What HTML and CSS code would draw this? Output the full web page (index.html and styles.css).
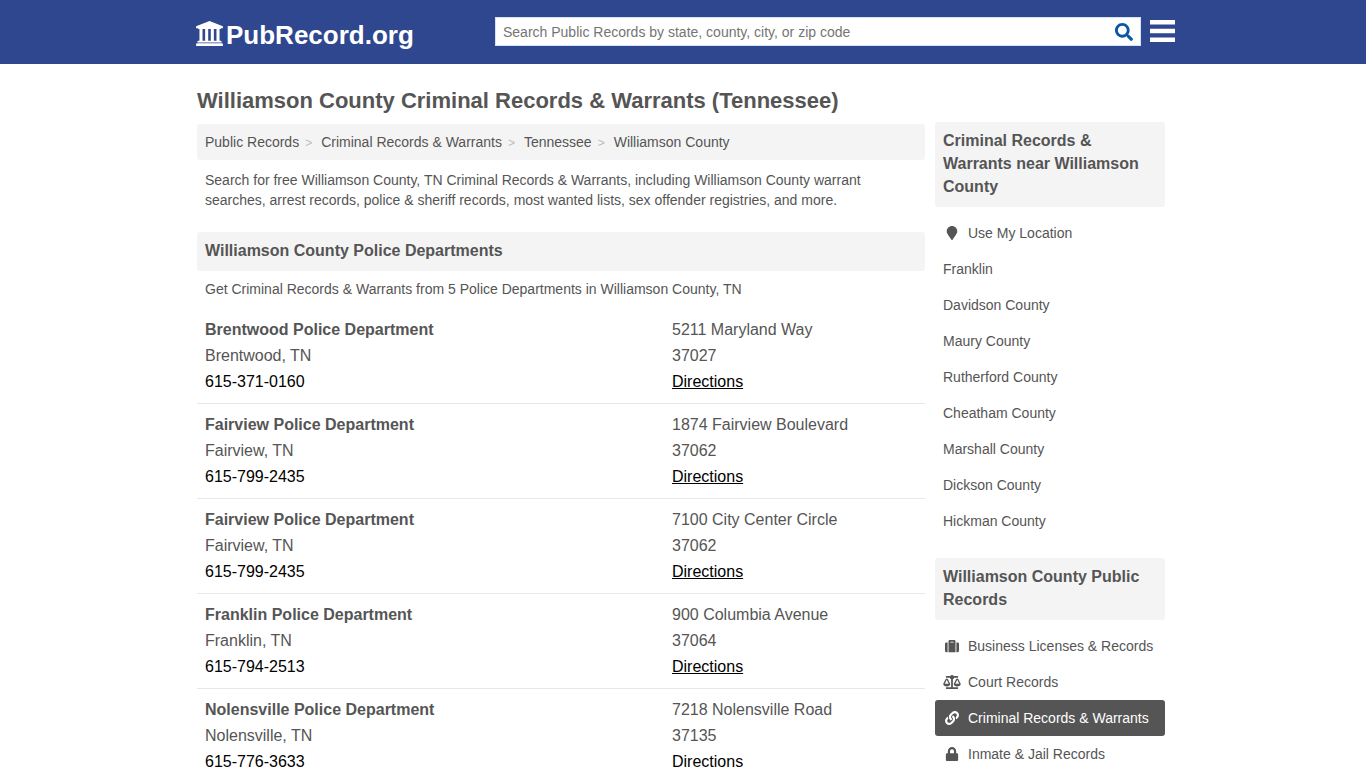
FILE: index.html
```html
<!DOCTYPE html>
<html lang="en">
<head>
    <meta charset="UTF-8">
    <meta name="viewport" content="width=device-width, initial-scale=1.0">
    <title>Williamson County Criminal Records &amp; Warrants (Tennessee)</title>
    <link rel="stylesheet" href="styles.css">
</head>
<body>
<header class="header">
    <div class="wrap header_row">
        <a class="logo" href="#">
            <svg class="logo_icon" viewBox="0 0 1920 1792"><path d="M960 0l960 384v128h-128q0 26-20.500 45t-48.500 19h-1526q-28 0-48.500-19t-20.500-45h-128v-128zM240 560h220v848h187v-848h220v848h186v-848h220v848h187v-848h220v848h75q28 0 48.500 19t20.500 45v64h-1728v-64q0-26 20.500-45t48.500-19h75v-848zM1851 1600q28 0 48.500 19t20.500 45v128h-1920v-128q0-26 20.500-45t48.500-19h1782z"/></svg>
            <span>PubRecord.org</span>
        </a>
        <form class="search">
            <input class="search_input" type="text" aria-label="Search Public Records" placeholder="Search Public Records by state, county, city, or zip code">
            <button class="search_btn" type="button" aria-label="Search">
                <svg class="search_icon" viewBox="0 0 512 512"><path d="M505 442.7L405.3 343c-4.5-4.5-10.6-7-17-7H372c27.6-35.3 44-79.7 44-128C416 93.1 322.9 0 208 0S0 93.1 0 208s93.1 208 208 208c48.3 0 92.7-16.4 128-44v16.3c0 6.4 2.5 12.5 7 17l99.7 99.7c9.4 9.4 24.6 9.4 33.9 0l28.3-28.3c9.4-9.4 9.4-24.6.1-34zM208 336c-70.7 0-128-57.2-128-128 0-70.7 57.2-128 128-128 70.7 0 128 57.2 128 128 0 70.7-57.2 128-128 128z"/></svg>
            </button>
        </form>
        <button class="menu_btn" type="button" aria-label="Menu">
            <svg class="menu_icon" viewBox="0 0 25 22"><path d="M0 0h25v4.400H0zM0 8.800h25v4.400H0zM0 17.600h25V22H0z"/></svg>
        </button>
    </div>
</header>
<div class="wrap">
    <h1 class="title">Williamson County Criminal Records &amp; Warrants (Tennessee)</h1>
    <div class="columns">
        <main class="main">
            <nav class="breadcrumb">
                <a href="#">Public Records</a>
                <a href="#">Criminal Records &amp; Warrants</a>
                <a href="#">Tennessee</a>
                <a href="#">Williamson County</a>
            </nav>
            <p class="text intro">Search for free Williamson County, TN Criminal Records &amp; Warrants, including Williamson County warrant searches, arrest records, police &amp; sheriff records, most wanted lists, sex offender registries, and more.</p>
            <h2 class="heading">Williamson County Police Departments</h2>
            <p class="text">Get Criminal Records &amp; Warrants from 5 Police Departments in Williamson County, TN</p>
            <div class="offices">
                <div class="office">
                    <div><b>Brentwood Police Department</b><br>Brentwood, TN<br><a class="phone" href="tel:6153710160">615-371-0160</a></div>
                    <div>5211 Maryland Way<br>37027<br><a class="directions" href="#">Directions</a></div>
                </div>
                <div class="office">
                    <div><b>Fairview Police Department</b><br>Fairview, TN<br><a class="phone" href="tel:6157992435">615-799-2435</a></div>
                    <div>1874 Fairview Boulevard<br>37062<br><a class="directions" href="#">Directions</a></div>
                </div>
                <div class="office">
                    <div><b>Fairview Police Department</b><br>Fairview, TN<br><a class="phone" href="tel:6157992435">615-799-2435</a></div>
                    <div>7100 City Center Circle<br>37062<br><a class="directions" href="#">Directions</a></div>
                </div>
                <div class="office">
                    <div><b>Franklin Police Department</b><br>Franklin, TN<br><a class="phone" href="tel:6157942513">615-794-2513</a></div>
                    <div>900 Columbia Avenue<br>37064<br><a class="directions" href="#">Directions</a></div>
                </div>
                <div class="office">
                    <div><b>Nolensville Police Department</b><br>Nolensville, TN<br><a class="phone" href="tel:6157763633">615-776-3633</a></div>
                    <div>7218 Nolensville Road<br>37135<br><a class="directions" href="#">Directions</a></div>
                </div>
            </div>
        </main>
        <aside class="side">
            <h2 class="heading">Criminal Records &amp; Warrants near Williamson County</h2>
            <ul class="side_list">
                <li><a href="#"><svg class="side_icon" viewBox="0 0 384 512"><path d="M172.268 501.67C26.97 291.031 0 269.413 0 192 0 85.961 85.961 0 192 0s192 85.961 192 192c0 77.413-26.97 99.031-172.268 309.67-9.535 13.774-29.93 13.773-39.464 0z"/></svg>Use My Location</a></li>
                <li><a href="#">Franklin</a></li>
                <li><a href="#">Davidson County</a></li>
                <li><a href="#">Maury County</a></li>
                <li><a href="#">Rutherford County</a></li>
                <li><a href="#">Cheatham County</a></li>
                <li><a href="#">Marshall County</a></li>
                <li><a href="#">Dickson County</a></li>
                <li><a href="#">Hickman County</a></li>
            </ul>
            <h2 class="heading">Williamson County Public Records</h2>
            <ul class="side_list">
                <li><a href="#"><svg class="side_icon" viewBox="0 0 512 512"><path d="M128 480h256V80c0-26.500-21.500-48-48-48H176c-26.500 0-48 21.500-48 48v400zm64-384h128v32H192V96zm320 80v256c0 26.500-21.500 48-48 48h-48V128h48c26.500 0 48 21.500 48 48zM96 480H48c-26.500 0-48-21.500-48-48V176c0-26.500 21.500-48 48-48h48v352z"/></svg>Business Licenses &amp; Records</a></li>
                <li><a href="#"><svg class="side_icon" viewBox="0 0 640 512"><path d="M256 336h-.02c0-16.18 1.34-8.73-85.05-181.51-17.65-35.29-68.19-35.36-85.87 0C-2.06 328.75.02 320.33.02 336H0c0 44.18 57.31 80 128 80s128-35.82 128-80zM128 176l72 144H56l72-144zm511.98 160c0-16.18 1.34-8.73-85.05-181.51-17.65-35.29-68.19-35.36-85.87 0-87.12 174.26-85.04 165.84-85.04 181.51H384c0 44.18 57.31 80 128 80s128-35.82 128-80h-.02zM440 320l72-144 72 144H440zm88 128H352V153.25c23.51-10.29 41.16-31.48 46.39-57.25H528c8.84 0 16-7.16 16-16V48c0-8.84-7.16-16-16-16H383.64C369.04 12.68 346.09 0 320 0s-49.04 12.68-63.64 32H112c-8.84 0-16 7.16-16 16v32c0 8.84 7.16 16 16 16h129.61c5.23 25.77 22.87 46.96 46.39 57.25V448H112c-8.84 0-16 7.16-16 16v32c0 8.84 7.16 16 16 16h416c8.84 0 16-7.16 16-16v-32c0-8.84-7.16-16-16-16z"/></svg>Court Records</a></li>
                <li><a class="active" href="#"><svg class="side_icon" viewBox="0 0 512 512"><path d="M326.612 185.391c59.747 59.809 58.927 155.698.36 214.59-.11.12-.24.25-.36.37l-67.2 67.2c-59.27 59.27-155.699 59.262-214.96 0-59.27-59.26-59.27-155.7 0-214.96l37.106-37.106c9.84-9.84 26.786-3.3 27.294 10.606.648 17.722 3.826 35.527 9.69 52.721 1.986 5.822.567 12.262-3.783 16.612l-13.087 13.087c-28.026 28.026-28.905 73.66-1.155 101.96 28.024 28.579 74.086 28.749 102.325.51l67.2-67.19c28.191-28.191 28.073-73.757 0-101.83-3.701-3.694-7.429-6.564-10.341-8.569a16.037 16.037 0 0 1-6.947-12.606c-.396-10.567 3.348-21.456 11.698-29.806l21.054-21.055c5.521-5.521 14.182-6.199 20.584-1.731a152.482 152.482 0 0 1 20.522 17.197zM467.547 44.449c-59.261-59.262-155.69-59.27-214.96 0l-67.2 67.2c-.12.12-.25.25-.36.37-58.566 58.892-59.387 154.781.36 214.59a152.454 152.454 0 0 0 20.521 17.196c6.402 4.468 15.064 3.789 20.584-1.731l21.054-21.055c8.35-8.35 12.094-19.239 11.698-29.806a16.037 16.037 0 0 0-6.947-12.606c-2.912-2.005-6.64-4.875-10.341-8.569-28.073-28.073-28.191-73.639 0-101.83l67.2-67.19c28.239-28.239 74.3-28.069 102.325.51 27.75 28.3 26.872 73.934-1.155 101.96l-13.087 13.087c-4.35 4.35-5.769 10.79-3.783 16.612 5.864 17.194 9.042 34.999 9.69 52.721.509 13.906 17.454 20.446 27.294 10.606l37.106-37.106c59.271-59.259 59.271-155.699.001-214.959z"/></svg>Criminal Records &amp; Warrants</a></li>
                <li><a href="#"><svg class="side_icon" viewBox="0 0 448 512"><path d="M400 224h-24v-72C376 68.2 307.8 0 224 0S72 68.2 72 152v72H48c-26.5 0-48 21.5-48 48v192c0 26.5 21.5 48 48 48h352c26.5 0 48-21.5 48-48V272c0-26.5-21.5-48-48-48zm-104 0H152v-72c0-39.7 32.3-72 72-72s72 32.3 72 72v72z"/></svg>Inmate &amp; Jail Records</a></li>
            </ul>
        </aside>
    </div>
</div>
</body>
</html>
```

FILE: styles.css
```css
body{
    margin: 0px;
    font-family: "Liberation Sans", Arial, sans-serif;
    font-size: 14px;
    color: #555;
    background: white;
}
a{
    color: inherit;
    text-decoration: none;
}
svg{
    display: block;
    fill: currentColor;
}
button{
    border: 0;
    padding: 0;
    background: none;
    cursor: pointer;
}
.wrap{
    box-sizing: border-box;
    max-width: 980px;
    margin: 0 auto;
    padding: 0 8px 0 4px;
}

/* header */
.header{
    background: #2e478f;
    color: white;
}
.header_row{
    display: flex;
    align-items: center;
    justify-content: space-between;
    height: 64px;
}
.logo{
    display: flex;
    align-items: center;
    gap: 3px;
    font-size: 26px;
    font-weight: bold;
    line-height: 30px;
    padding-top: 6px;
}
.logo_icon{
    width: 27px;
    height: 25px;
    margin: 0 0 3px -1px;
}
.search{
    position: relative;
    flex: 0 1 646px;
    margin-left: auto;
    margin-right: 9px;
    padding-bottom: 2px;
}
.search_input{
    display: block;
    box-sizing: border-box;
    width: 100%;
    height: 29px;
    border: 1px solid #d5e3f5;
    padding: 2px 36px 0 7px;
    font-family: inherit;
    font-size: 14px;
}
.search_input::placeholder{
    color: #757575;
}
.search_btn{
    position: absolute;
    top: 6px;
    right: 8px;
    color: #0b56a4;
}
.search_icon{
    width: 18px;
    height: 18px;
}
.menu_btn{
    color: white;
    margin-right: -10px;
    padding-bottom: 2px;
}
.menu_icon{
    width: 25px;
    height: 22px;
}

/* page */
.title{
    margin: 0;
    padding: 22px 0 6px;
    font-size: 22px;
    line-height: 30px;
}
.columns{
    display: flex;
    align-items: flex-start;
    gap: 10px;
}
.main{
    flex: 1;
    min-width: 0;
    padding-top: 2px;
}
.side{
    flex: 0 0 230px;
}
.breadcrumb{
    display: flex;
    flex-wrap: wrap;
    padding: 8px;
    line-height: 20px;
    background: #f4f4f4;
    border-radius: 3px;
}
.breadcrumb a:not(:last-child)::after{
    content: ">";
    margin: 0 9px 0 6px;
    font-size: 12px;
    line-height: 1;
    color: #bbb;
}
.heading{
    margin: 0;
    padding: 7px 8px 9px;
    font-size: 16px;
    line-height: 23px;
    background: #f4f4f4;
    border-radius: 3px;
}
.text{
    margin: 0;
    padding: 8px;
    line-height: 20px;
}
.intro{
    padding: 10px 8px 22px;
}
.offices{
    padding-top: 2px;
}
.office{
    display: grid;
    grid-template-columns: 1fr 245px;
    padding: 8px;
    border-bottom: 1px solid #e8e8e8;
    font-size: 16px;
    line-height: 26px;
}
.office:last-child{
    border-bottom: 0;
}
.phone{
    color: black;
}
.directions{
    color: black;
    text-decoration: underline;
}

/* sidebar */
.side_list{
    list-style: none;
    margin: 8px 0 19px;
    padding: 0;
}
.side_list a{
    display: flex;
    align-items: center;
    padding: 8px;
    line-height: 20px;
    border-radius: 3px;
}
.side_list .active{
    background: #555;
    color: white;
}
.side_icon{
    width: 18px;
    height: 14px;
    margin-right: 7px;
}
```
